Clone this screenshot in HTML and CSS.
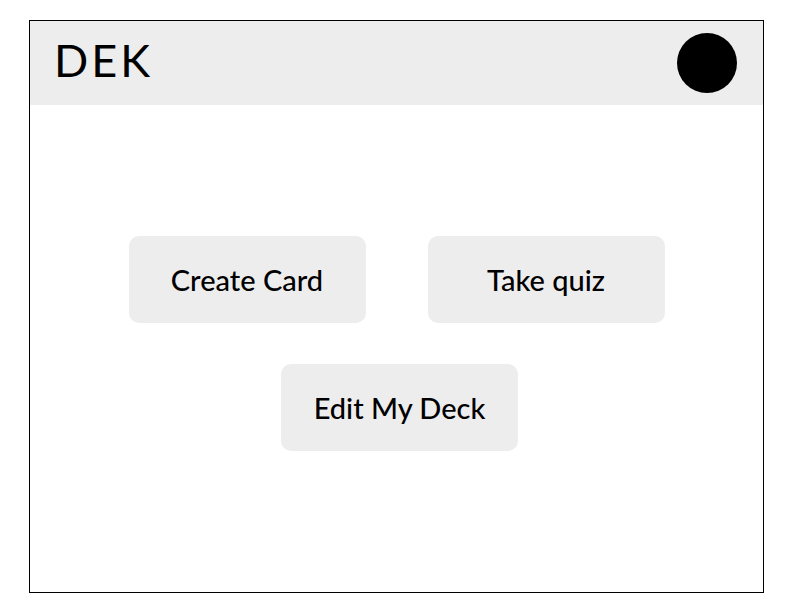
FILE: index.html
```html
<!DOCTYPE html>
<html lang="en">
<head>
  <meta charset="UTF-8" />
  <title>DEK</title>
  <meta name="viewport" content="width=device-width, initial-scale=1.0" />
  <link rel="stylesheet" href="styles.css">
</head>
<body>
  <div class="frame">
    <header>
      <div class="logo">DEK</div>
      <div class="avatar"></div>
    </header>

    <!-- main actions -->
    <div class="actions">
      <div class="row">
        <button>Create Card</button>
        <button>Take quiz</button>
      </div>
      <div class="row single">
        <button>Edit My Deck</button>
      </div>
    </div>
  </div>
</body>
</html>
```

FILE: styles.css
```css
body { margin:0; font-family:'Lato','Liberation Sans',sans-serif; background:#fff; color:#000; }
.frame { width:735px; height:573px; margin:20px 0 0 29px; border:1px solid #000; box-sizing:border-box; }

header { height:84px; background:#ededed; display:flex; align-items:center; justify-content:space-between; padding:0 26px 0 24px; }
.logo { font-size:45px; letter-spacing:3px; line-height:1; margin-top:-6px; }
.avatar { width:60px; height:60px; border-radius:50%; background:#000; }

/* buttons */
.actions { padding-top:131px; display:flex; flex-direction:column; gap:41px; }
.row { display:flex; justify-content:center; gap:62px; }
.row.single { padding-left:6px; }
.row button { width:237px; height:87px; background:#ededed; border:none; border-radius:10px; font-family:inherit; font-size:29px; font-weight:500; color:#000; cursor:pointer; }
```
